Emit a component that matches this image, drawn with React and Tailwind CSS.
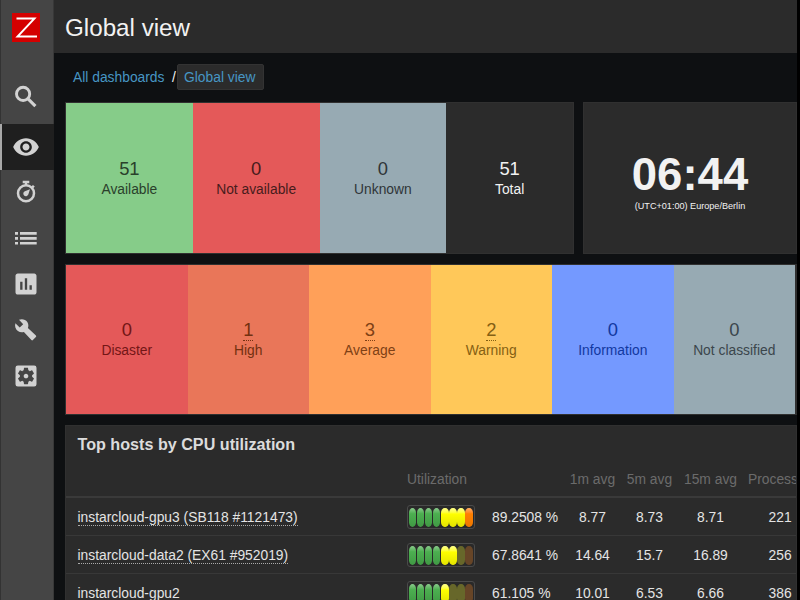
import { MdVisibility, MdInsertChart, MdSettingsApplications } from "react-icons/md";

function Search() {
  return (
    <svg width="28" height="28" viewBox="0 0 28 28" fill="none" stroke="currentColor">
      <circle cx="11.1" cy="10.9" r="6.6" strokeWidth="2.9" />
      <path d="M15.8 15.6l7.6 7.6" strokeWidth="3.1" />
    </svg>
  );
}

function Stopwatch() {
  return (
    <svg width="28" height="28" viewBox="0 0 28 28" fill="none" stroke="currentColor">
      <path d="M10.7 4h6.6M14 4v3" strokeWidth="2.4" />
      <path d="M20.2 7.8l1.8 1.6" strokeWidth="2.2" />
      <circle cx="14" cy="15.3" r="8" strokeWidth="2.5" />
      <path d="M18 11.2l-1.7 5.4a2.6 2.6 0 1 1-3.4-3.4z" fill="currentColor" stroke="none" />
    </svg>
  );
}

function List() {
  return (
    <svg width="28" height="28" viewBox="0 0 28 28" fill="currentColor">
      <path d="M3 8h3v2.8H3zM8 8h16.7v2.8H8zM3 13h3v2.8H3zM8 13h16.7v2.8H8zM3 18h3v2.6H3zM8 18h16.7v2.6H8z" />
    </svg>
  );
}

function Wrench() {
  return (
    <svg width="28" height="28" viewBox="0 0 28 28" fill="currentColor">
      <path d="M7 3.8c3-1.2 6.500-.4 8.300 2.200 1.200 1.800 1.400 4 .6 5.900l8 7.600c.5.500.5 1 0 1.500l-3 3.100c-.5.500-1 .5-1.500 0l-7.500-8.100c-2 .7-4.200.4-6-.9-2.500-1.800-3.400-4.900-2.500-7.800l4.300 4.200 3.500-3.300z" />
    </svg>
  );
}

const nav = [MdVisibility, Stopwatch, List, MdInsertChart, Wrench, MdSettingsApplications];

function Sidebar() {
  return (
    <aside className="w-[54px] shrink-0 bg-[#454545] border-l border-[#333] border-r border-r-[#383838] flex flex-col text-[#d2d2d2]">
      <div className="h-[73px] pt-[13px] pl-[11px]">
        <svg width="28" height="29" viewBox="0 0 28 29">
          <rect width="28" height="29" fill="#d40000" />
          <path d="M4.500 5.500h18L5.500 23.500h19.500" fill="none" stroke="#fff" strokeWidth="1.900" />
        </svg>
      </div>
      <div className="h-[51px] pl-[11px] pt-[10px]"><Search /></div>
      {nav.map((Icon, i) => (
        <div
          key={i}
          className={
            i === 0
              ? "h-[46px] -ml-px flex items-center pb-px pl-[10px] bg-[#1f1f1f] border-l-2 border-[#a8a8a8] -mr-px"
              : "h-[46px] flex items-center pb-[2px] pl-[11px]"
          }
        >
          <Icon size={28} />
        </div>
      ))}
    </aside>
  );
}

function Tile({ count, label, tone, link }) {
  return (
    <div className={`flex-1 flex flex-col items-center ${tone}`}>
      <span className={`text-[18.4px] leading-[22px] h-[22px] ${link ? "border-b border-dotted border-current" : ""}`}>{count}</span>
      <span className="text-[13.84px] leading-[18px]">{label}</span>
    </div>
  );
}

const hosts = [
  { name: "instarcloud-gpu3 (SB118 #1121473)", lit: 8, v: ["89.2508 %", "8.77", "8.73", "8.71", "221"] },
  { name: "instarcloud-data2 (EX61 #952019)", lit: 6, v: ["67.8641 %", "14.64", "15.7", "16.89", "256"] },
  { name: "instarcloud-gpu2", lit: 5, v: ["61.105 %", "10.01", "6.53", "6.66", "386"] },
];

function cellTone(i, lit) {
  if (i < 4) return "bg-linear-to-b from-[#8acb8c] via-[#4caf50] via-30% to-[#409a44]";
  if (i < 7) {
    return lit > i
      ? "bg-linear-to-b from-[#ffff86] via-[#ffff00] via-30% to-[#e4e400]"
      : "bg-[#67672a]";
  }
  return lit > i ? "bg-linear-to-b from-[#ffac60] via-[#ff8000] via-30% to-[#ee7700]" : "bg-[#674527]";
}

function Bar({ lit }) {
  return (
    <div className="w-[68px] h-[24px] rounded-[3px] border border-[#4a4a4a] bg-[#292929] flex pl-px pt-[2px]">
      {[0, 1, 2, 3, 4, 5, 6, 7].map((i) => (
        <div key={i} className={`w-[7.4px] mr-[0.65px] h-[18.5px] rounded-[3.7px/5px] ${cellTone(i, lit)}`} />
      ))}
    </div>
  );
}

function MetricsTable() {
  return (
    <section className="h-[176px] bg-[#2b2b2b] border border-[#303030] overflow-hidden">
      <h2 className="h-[34px] pt-[7px] pl-[11.5px] text-[16.15px] leading-[22px] font-bold text-[#dcdcdc]">Top hosts by CPU utilization</h2>
      <div className="flex h-[38px] pt-[9.5px] border-b-2 border-[#3a3a3a] text-[13.84px] leading-[18px] text-[#6b6b6b] whitespace-nowrap">
        <span className="w-[341px] shrink-0" />
        <span className="w-[157px] shrink-0">Utilization</span>
        <span className="w-[57px] shrink-0 text-center">1m avg</span>
        <span className="w-[57px] shrink-0 text-center">5m avg</span>
        <span className="w-[65px] shrink-0 text-center">15m avg</span>
        <span className="pl-[5px]">Processes</span>
      </div>
      {hosts.map((h, i) => (
        <div key={h.name} className="flex h-[38px] pt-[7px] border-b border-[#383838] text-[13.84px] leading-[24px] text-[#e4e4e4] whitespace-nowrap">
          <div className="w-[341px] shrink-0 pl-[11.5px] flex items-start pt-[4px]">
            <span className={i < 2 ? "block leading-[16px] h-[17px] border-b border-dotted border-[#aaa]" : "block leading-[16px]"}>{h.name}</span>
          </div>
          <Bar lit={h.lit} />
          <span className="w-[89px] shrink-0 pl-[17px]">{h.v[0]}</span>
          <span className="w-[57px] shrink-0 text-center">{h.v[1]}</span>
          <span className="w-[57px] shrink-0 text-center">{h.v[2]}</span>
          <span className="w-[65px] shrink-0 text-center">{h.v[3]}</span>
          <span className="pl-[25.5px]">{h.v[4]}</span>
        </div>
      ))}
    </section>
  );
}

export default function App() {
  return (
    <div className="w-[800px] h-[600px] overflow-hidden bg-black flex font-['Liberation_Sans',sans-serif]">
      <Sidebar />
      <main className="w-[743px] shrink-0 bg-[#0e1012] overflow-hidden">
        <header className="h-[53px] bg-[#2b2b2b] pl-[11px] pt-[12px] text-[24.2px] leading-[32px] text-[#f2f2f2]">Global view</header>
        <nav className="h-[49px] pt-[11px] pl-[19px] flex items-start text-[13.84px] leading-[26px] text-[#4796c4]">
          <span className="w-[99px]">All dashboards</span>
          <span className="w-[5px] text-[#f2f2f2]">/</span>
          <span className="h-[26px] w-[87px] pl-[6px] bg-[#2b2b2b] border border-[#333] rounded-[2px] leading-[24px]">Global view</span>
        </nav>
        <div className="pl-[11px] flex flex-col gap-[10px]">
          <div className="flex gap-[9px] h-[152px]">
            <div className="w-[509px] flex border border-[#303030] bg-[#2b2b2b]">
              <Tile count="51" label="Available" tone="pt-[55px] bg-[#86cc89] text-[#2a402b]" />
              <Tile count="0" label="Not available" tone="pt-[55px] bg-[#e45959] text-[#471c1c]" />
              <Tile count="0" label="Unknown" tone="pt-[55px] bg-[#97aab3] text-[#2f3538]" />
              <Tile count="51" label="Total" tone="pt-[55px] text-[#f2f2f2]" />
            </div>
            <div className="flex-1 bg-[#2b2b2b] border border-[#303030] flex flex-col items-center text-[#f2f2f2]">
              <span className="mt-[46px] text-[45.5px] leading-[52px] font-bold">06:44</span>
              <span className="-mt-px text-[9.1px] leading-[12px]">(UTC+01:00) Europe/Berlin</span>
            </div>
          </div>
          <div className="h-[151px] flex border border-r-2 border-[#303030]">
            <Tile count="0" label="Disaster" tone="pt-[54px] bg-[#e45959] text-[#731616]" />
            <Tile count="1" label="High" tone="pt-[54px] bg-[#e97659] text-[#733010]" link />
            <Tile count="3" label="Average" tone="pt-[54px] bg-[#ffa059] text-[#804015]" link />
            <Tile count="2" label="Warning" tone="pt-[54px] bg-[#ffc859] text-[#856013]" link />
            <Tile count="0" label="Information" tone="pt-[54px] bg-[#7499ff] text-[#1238a0]" />
            <Tile count="0" label="Not classified" tone="pt-[54px] bg-[#97aab3] text-[#3b464c]" />
          </div>
          <MetricsTable />
        </div>
      </main>
    </div>
  );
}
